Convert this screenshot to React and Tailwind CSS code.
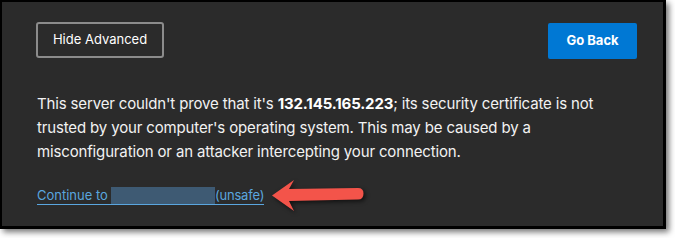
export default function App() {
  return (
    <div className="w-[675px] h-[238px] bg-white relative" style={{ fontFamily: 'Inter, "Noto Sans", sans-serif' }}>
      <div className="w-[666px] h-[229px] bg-[#2b2b2b] border-black border-t-2 border-l-2 border-r-[3px] border-b-[3px] shadow-[3px_3px_6px_rgba(0,0,0,0.55)] pl-[34px] pr-[26px] pt-[20px]">
        <div className="flex justify-between items-start">
          <div className="w-[128px] h-[36px] border-2 border-[#8c8c8c] rounded-[3px] flex items-center justify-center text-white text-[13px]">
            Hide Advanced
          </div>
          <div className="w-[89px] h-[36px] mt-[1px] bg-[#0078d4] rounded-[2px] flex items-center justify-center text-white text-[13px] font-bold">
            Go Back
          </div>
        </div>
        <p className="mt-[33px] text-[#f2f2f2] text-[15px] tracking-[-0.15px] leading-[24px] pl-[1px] w-[600px]">
          This server couldn't prove that it's <span className="font-bold text-white">132.145.165.223</span>; its security certificate is not trusted by your computer's operating system. This may be caused by a misconfiguration or an attacker intercepting your connection.
        </p>
        <div className="mt-[22px] pl-[1px] flex">
          <span className="text-[13px] leading-[18px] text-[#5aa6df] border-b border-[#5aa6df] flex items-end">
            <span>Continue to</span>
            <span className="inline-block w-[104px] h-[17px] ml-[3px] bg-[#3e5a73] blur-[0.5px]"></span>
            <span className="tracking-[-0.2px]">(unsafe)</span>
          </span>
        </div>
      </div>
      <svg className="absolute left-0 top-0" width="675" height="238" style={{ filter: 'drop-shadow(2px 2px 2px rgba(0,0,0,0.6))' }}>
        <path d="M272,195.5 L294,180 L289,189 L358,188 Q363.5,188 363.5,193.5 Q363.5,199.5 358,199.5 L289,201 L294,211 Z" fill="#f3544a" />
      </svg>
    </div>
  );
}
